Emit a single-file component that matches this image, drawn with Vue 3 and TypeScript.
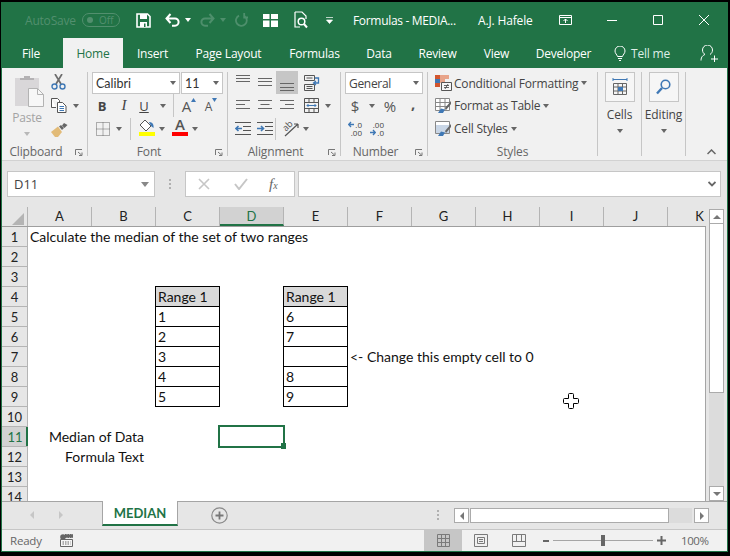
<script setup lang="ts">
interface Tab { label: string; width: number; active?: boolean }
interface Cell { text?: string; kind?: 'plain' | 'head' | 'box' | 'right' }

const tabs: Tab[] = [
  { label: 'File', width: 58 },
  { label: 'Home', width: 60, active: true },
  { label: 'Insert', width: 59 },
  { label: 'Page Layout', width: 93 },
  { label: 'Formulas', width: 79 },
  { label: 'Data', width: 50 },
  { label: 'Review', width: 67 },
  { label: 'View', width: 51 },
  { label: 'Developer', width: 83 }
]

const columns = ['A', 'B', 'C', 'D', 'E', 'F', 'G', 'H', 'I', 'J', 'K']
const rowNumbers = Array.from({ length: 14 }, (_, i) => i + 1)

const cellMap: Record<string, Cell> = {
  A1: { text: 'Calculate the median of the set of two ranges' },
  C4: { text: 'Range 1', kind: 'head' },
  E4: { text: 'Range 1', kind: 'head' },
  C5: { text: '1', kind: 'box' },
  C6: { text: '2', kind: 'box' },
  C7: { text: '3', kind: 'box' },
  C8: { text: '4', kind: 'box' },
  C9: { text: '5', kind: 'box' },
  E5: { text: '6', kind: 'box' },
  E6: { text: '7', kind: 'box' },
  E7: { kind: 'box' },
  E8: { text: '8', kind: 'box' },
  E9: { text: '9', kind: 'box' },
  F7: { text: '<- Change this empty cell to 0' },
  B11: { text: 'Median of Data', kind: 'right' },
  B12: { text: 'Formula Text', kind: 'right' }
}

const cells = rowNumbers.flatMap((r) =>
  columns.map((c) => ({ id: c + r, ...(cellMap[c + r] ?? {}) }))
)

const decMore = '.0\n.00'
const decLess = '.00\n.0'
</script>

<template>
  <div class="screen">
    <div class="win">
      <!-- title bar -->
      <header class="title">
        <span class="autosave">AutoSave</span>
        <span class="toggle"><i class="dot"></i><span>Off</span></span>
        <svg class="t-save" width="15" height="15" viewBox="0 0 15 15">
          <path d="M1 1h10.500L14 3.500V14H1z" fill="none" stroke="#fff" stroke-width="1.600" />
          <rect x="4" y="1" width="7" height="5" fill="#fff" />
          <rect x="4" y="9" width="7" height="5" fill="#fff" />
          <rect x="8" y="10.500" width="1.500" height="3.500" fill="#217346" />
        </svg>
        <svg class="t-undo" width="15" height="14" viewBox="0 0 15 14">
          <path d="M1.500 5.500h8.500a3.600 3.600 0 0 1 0 7.200H7M5.500 1L1.500 5.500 5.500 10" fill="none" stroke="#fff" stroke-width="2" />
        </svg>
        <i class="caret white t-c1"></i>
        <svg class="t-redo" width="15" height="14" viewBox="0 0 15 14">
          <path d="M13.500 5.500H5a3.600 3.600 0 0 0 0 7.200h3M9.500 1l4 4.500-4 4.500" fill="none" stroke="#4e8f6c" stroke-width="2" />
        </svg>
        <i class="caret dim t-c2"></i>
        <svg class="t-repeat" width="13" height="14" viewBox="0 0 13 14">
          <path d="M4 2.600A5.400 5.400 0 1 0 9.400 3M9.200 0v4.500H13" fill="none" stroke="#4e8f6c" stroke-width="1.800" />
        </svg>
        <svg class="t-grid" width="15" height="13" viewBox="0 0 15 13">
          <path d="M0 0h6.500v5H0zM8 0h7v5H8zM0 6.500h6.500V13H0zM8 6.500h7V13H8z" fill="#fff" />
        </svg>
        <svg class="t-prev" width="14" height="18" viewBox="0 0 14 18">
          <path d="M1 1h7l4 4v3M1 1v15h5" fill="none" stroke="#fff" stroke-width="1.200" />
          <circle cx="7.500" cy="10.500" r="3.300" fill="none" stroke="#fff" stroke-width="1.500" />
          <path d="M10 13l3 3.500" stroke="#fff" stroke-width="2" />
        </svg>
        <svg class="t-cust" width="7" height="7" viewBox="0 0 7 7">
          <path d="M0 .5h7M.5 3h6L3.500 6.500z" fill="#fff" stroke="#fff" stroke-width=".7" />
        </svg>
        <span class="doc">Formulas - MEDIA...</span>
        <span class="user">A.J. Hafele</span>
        <svg class="t-disp" width="13" height="10" viewBox="0 0 13 10">
          <path d="M.5.500h12v9H.5zM.5 2.500h12M6.500 8V4M4.500 6l2-2 2 2" fill="none" stroke="#fff" />
        </svg>
        <svg class="t-min" width="10" height="10" viewBox="0 0 10 10"><path d="M0 5.500h10" stroke="#fff" /></svg>
        <svg class="t-max" width="10" height="10" viewBox="0 0 10 10"><path d="M.5.500h9v9h-9z" fill="none" stroke="#fff" /></svg>
        <svg class="t-close" width="10" height="10" viewBox="0 0 10 10"><path d="M0 0l10 10M10 0L0 10" stroke="#fff" /></svg>
      </header>

      <!-- tabs -->
      <nav class="tabs">
        <span
          v-for="t in tabs"
          :key="t.label"
          class="tab"
          :class="{ active: t.active }"
          :style="{ width: t.width + 'px' }"
        >{{ t.label }}</span>
        <svg class="bulb" width="12" height="15" viewBox="0 0 12 15">
          <path d="M3.500 10.500C3 8.500 1 7.500 1 5a5 5 0 0 1 10 0c0 2.500-2 3.500-2.500 5.500zM4 12.500h4M5 14.500h2" fill="none" stroke="#fff" />
        </svg>
        <span class="tell">Tell me</span>
        <svg class="person" width="18" height="17" viewBox="0 0 18 17">
          <path d="M1 15.500c0-4 2.500-5.500 4-6-1.500-1-2.500-2.500-2.500-4.500a5 5 0 0 1 10 0c0 2-1 3.500-2.500 4.500" fill="none" stroke="#fff" />
          <path d="M11 14h7M14.500 10.500v6.500" stroke="#fff" />
        </svg>
      </nav>

      <!-- ribbon -->
      <section class="ribbon">
        <div class="group clipboard">
          <div class="body row-body">
            <div class="paste">
              <svg width="30" height="32" viewBox="0 0 30 32">
                <rect x="1" y="3" width="24" height="28" fill="#d9d7d9" />
                <path d="M6 5V3h4V1h6v2h4v2z" fill="#b4b2b4" />
                <path d="M14.500 13.500h9l6 6v12h-15z" fill="#f7f7f7" stroke="#b3b3b3" />
                <path d="M23.500 13.500v6h6" fill="none" stroke="#b3b3b3" />
              </svg>
              <span class="paste-label">Paste</span>
              <i class="caret light"></i>
            </div>
            <div class="clip-tools">
              <svg class="scissors" width="15" height="16" viewBox="0 0 15 16">
                <path d="M4 0l6 10M11 0L5 10" stroke="#6d6d6d" stroke-width="1.700" fill="none" />
                <circle cx="3.500" cy="12.500" r="2.500" fill="none" stroke="#3f78b5" stroke-width="1.400" />
                <circle cx="11.500" cy="12.500" r="2.500" fill="none" stroke="#3f78b5" stroke-width="1.400" />
              </svg>
              <div class="copy-row">
                <svg width="16" height="15" viewBox="0 0 16 15">
                  <path d="M.5.500h6l2 2v2M.5.500v9h4.500" fill="#fff" stroke="#555" />
                  <path d="M6.500 4.500h5l3.500 3.500v6.500H6.500z" fill="#fff" stroke="#555" />
                  <path d="M8.500 8.500h4.500M8.500 10.500h4.500M8.500 12.500h4.500" stroke="#3f78b5" />
                </svg>
                <i class="caret"></i>
              </div>
              <svg class="brush" width="17" height="15" viewBox="0 0 17 15">
                <path d="M0 10l7-5.500L11 10l-4 5H4z" fill="#e2bb78" />
                <path d="M8 4.500L11 8l2-2-3-3zM11 3.500l2-2.500 3.500 2-3 3z" fill="#666" />
              </svg>
            </div>
          </div>
          <div class="label launched">
            <span>Clipboard</span>
            <svg class="launch" width="8" height="7" viewBox="0 0 8 7"><path d="M.5 6V.5H7M3 3l3.500 3M4 6.500h3v-3" fill="none" stroke="#777" /></svg>
          </div>
        </div>
        <i class="sep"></i>

        <div class="group font">
          <div class="body">
            <div class="r r1 font-r1">
              <span class="select fname"><span>Calibri</span><i class="caret"></i></span>
              <span class="select fsize"><span>11</span><i class="caret"></i></span>
            </div>
            <div class="r r2 font-r2">
              <b class="s w22 glyph">B</b>
              <em class="s w22 glyph ital">I</em>
              <u class="s w18 glyph">U</u>
              <span class="s w20"><i class="caret"></i></span>
              <i class="vsep tall"></i>
              <span class="s w30 big-a">A<svg width="5" height="4" viewBox="0 0 5 4"><path d="M0 4l2.500-4L5 4z" fill="#3f78b5" /></svg></span>
              <span class="s w14 small-a">A<svg width="5" height="4" viewBox="0 0 5 4"><path d="M0 0l2.500 4L5 0z" fill="#3f78b5" /></svg></span>
            </div>
            <div class="r r3 font-r3">
              <svg width="14" height="14" viewBox="0 0 14 14">
                <path d="M.5.500h13v13H.5zM7 .5v13M.5 7h13" fill="none" stroke="#666" stroke-dasharray="1 1" />
              </svg>
              <span class="s w18"><i class="caret"></i></span>
              <i class="vsep short"></i>
              <span class="colorbtn fill">
                <svg width="17" height="13" viewBox="0 0 17 13">
                  <path d="M7 1l6 6-5 5-6-6z" fill="#fff" stroke="#555" />
                  <path d="M11 3c3 0 5 2 4.500 6L13 7z" fill="#3f78b5" />
                </svg>
                <i class="bar yellow"></i>
              </span>
              <span class="s w14"><i class="caret"></i></span>
              <span class="colorbtn fcolor">
                <span class="a-letter">A</span>
                <i class="bar red"></i>
              </span>
              <span class="s w14 c-after"><i class="caret"></i></span>
            </div>
          </div>
          <div class="label launched">
            <span>Font</span>
            <svg class="launch" width="8" height="7" viewBox="0 0 8 7"><path d="M.5 6V.5H7M3 3l3.500 3M4 6.500h3v-3" fill="none" stroke="#777" /></svg>
          </div>
        </div>
        <i class="sep"></i>

        <div class="group align">
          <div class="body">
            <div class="r r1 align-r1">
              <svg width="14" height="22" viewBox="0 0 14 22"><path d="M0 3.500h14M0 6.500h14M0 9.500h14" stroke="#666" /></svg>
              <svg class="a-mid" width="14" height="22" viewBox="0 0 14 22"><path d="M0 6.500h14M0 9.500h14M0 13.500h14" stroke="#666" /></svg>
              <span class="a-sel"><svg width="14" height="22" viewBox="0 0 14 22"><path d="M0 11.500h14M0 15.500h14M0 18.500h14" stroke="#666" /></svg></span>
              <svg class="a-wrap" width="16" height="16" viewBox="0 0 16 16">
                <path d="M.5.500h10v5H.5zM.5 9.500h10v6H.5zM2.500 3h6M2.500 11.500h6M2.500 13.500h6" fill="none" stroke="#555" />
                <path d="M11 3h3.500v5H10M12 6l-2.500 2 2.500 2" fill="none" stroke="#3f78b5" stroke-width="1.300" />
              </svg>
            </div>
            <div class="r r2 align-r2">
              <svg width="14" height="23" viewBox="0 0 14 23"><path d="M0 6.500h14M0 10.500h9M0 14.500h14" stroke="#666" /></svg>
              <svg class="a-mid" width="14" height="23" viewBox="0 0 14 23"><path d="M0 6.500h14M2.500 10.500h9M0 14.500h14" stroke="#666" /></svg>
              <svg class="a-right" width="14" height="23" viewBox="0 0 14 23"><path d="M0 6.500h14M5 10.500h9M0 14.500h14" stroke="#666" /></svg>
              <svg class="a-merge" width="15" height="15" viewBox="0 0 15 15">
                <path d="M.5.500h14v14H.5zM.5 4.500h14M.5 10.500h14M5 .5v4M10 .5v4M5 10.500v4M10 10.500v4" fill="none" stroke="#555" />
                <path d="M3 7.500h9M4.500 6L3 7.500 4.500 9M10.500 6L12 7.500 10.500 9" fill="none" stroke="#3f78b5" />
              </svg>
              <i class="caret merge-c"></i>
            </div>
            <div class="r r3 align-r3">
              <svg width="16" height="14" viewBox="0 0 16 14">
                <path d="M0 .5h16M8 4.500h8M8 8.500h8M0 12.500h16" stroke="#555" />
                <path d="M7 6.500H1M3.500 4L1 6.500 3.500 9" fill="none" stroke="#3f78b5" stroke-width="1.600" />
              </svg>
              <svg class="a-ind2" width="16" height="14" viewBox="0 0 16 14">
                <path d="M0 .5h16M8 4.500h8M8 8.500h8M0 12.500h16" stroke="#555" />
                <path d="M0 6.500h6M4 4l2.500 2.500L4 9" fill="none" stroke="#3f78b5" stroke-width="1.600" />
              </svg>
              <i class="vsep short a-vs"></i>
              <span class="a-orient">
                <svg width="18" height="18" viewBox="0 0 18 18">
                  <path d="M3 16L16 4M16 4h-4M16 4v4" fill="none" stroke="#555" stroke-width="1.200" />
                </svg>
                <span class="ab">ab</span>
              </span>
              <i class="caret o-c"></i>
            </div>
          </div>
          <div class="label launched">
            <span>Alignment</span>
            <svg class="launch" width="8" height="7" viewBox="0 0 8 7"><path d="M.5 6V.5H7M3 3l3.500 3M4 6.500h3v-3" fill="none" stroke="#777" /></svg>
          </div>
        </div>
        <i class="sep"></i>

        <div class="group number">
          <div class="body">
            <div class="r r1 num-r1">
              <span class="select general"><span>General</span><i class="caret"></i></span>
            </div>
            <div class="r r2 num-r2">
              <span class="s w16 numg">$</span>
              <span class="s w18"><i class="caret"></i></span>
              <span class="s w18 numg">%</span>
              <span class="s comma">,</span>
            </div>
            <div class="r r3 num-r3">
              <span class="dec">
                <svg class="dec-arrow top" width="6" height="7" viewBox="0 0 6 7"><path d="M6 3.500H1M3 1L.7 3.500 3 6" fill="none" stroke="#3f78b5" stroke-width="1.300" /></svg>
                <span class="dec-t">{{ decMore }}</span>
              </span>
              <span class="dec">
                <svg class="dec-arrow bottom" width="6" height="7" viewBox="0 0 6 7"><path d="M0 3.500h5M3 1l2.300 2.500L3 6" fill="none" stroke="#3f78b5" stroke-width="1.300" /></svg>
                <span class="dec-t">{{ decLess }}</span>
              </span>
            </div>
          </div>
          <div class="label launched">
            <span>Number</span>
            <svg class="launch" width="8" height="7" viewBox="0 0 8 7"><path d="M.5 6V.5H7M3 3l3.500 3M4 6.500h3v-3" fill="none" stroke="#777" /></svg>
          </div>
        </div>
        <i class="sep"></i>

        <div class="group styles">
          <div class="body">
            <div class="r r1 style-row">
              <svg width="17" height="16" viewBox="0 0 17 16">
                <rect x="0" y="0" width="5" height="4" fill="#d2552d" /><rect x="5" y="0" width="9" height="4" fill="#e8a48a" />
                <rect x="0" y="4" width="5" height="4" fill="#3f78b5" /><rect x="5" y="4" width="5" height="4" fill="#e8a48a" />
                <rect x="0" y="8" width="5" height="4" fill="#d2552d" />
                <path d="M6.500 7.500h10v8h-10z" fill="#f6f6f6" stroke="#555" />
                <path d="M9 10.500h5M9 12.500h5M10 14l3-5" stroke="#444" stroke-width=".8" />
              </svg>
              <span class="st">Conditional Formatting</span><i class="caret"></i>
            </div>
            <div class="r r2 style-row">
              <svg width="17" height="16" viewBox="0 0 17 16">
                <path d="M.5.500h14v12H.5zM.5 4.500h14M.5 8.500h14M5 .5v12M10 .5v12" fill="#fff" stroke="#888" />
                <path d="M16 3L10 10l1 2 5-6z" fill="#666" />
                <path d="M3 15l3-4.500 4 1-2 3.500z" fill="#3f78b5" />
              </svg>
              <span class="st">Format as Table</span><i class="caret"></i>
            </div>
            <div class="r r3 style-row">
              <svg width="17" height="16" viewBox="0 0 17 16">
                <path d="M.5.500h14v12H.5z" fill="#fff" stroke="#888" />
                <rect x="1" y="4" width="13" height="8" fill="#c9d6e6" />
                <path d="M16 3L10 10l1 2 5-6z" fill="#666" />
                <path d="M3 15l3-4.500 4 1-2 3.500z" fill="#3f78b5" />
              </svg>
              <span class="st">Cell Styles</span><i class="caret"></i>
            </div>
          </div>
          <div class="label">Styles</div>
        </div>
        <i class="sep"></i>

        <div class="group big">
          <span class="bigbtn">
            <svg width="16" height="18" viewBox="0 0 16 18">
              <path d="M1 1.500h14M1 0v3M15 0v3" fill="none" stroke="#3f78b5" />
              <path d="M1.500 5.500h13v11h-13zM1.500 9h13M1.500 13h13M6 5.500v11M10.500 5.500v11" fill="#f6f6f6" stroke="#666" />
              <rect x="6" y="9" width="5" height="4" fill="#3f78b5" />
            </svg>
          </span>
          <span class="bigtext">Cells</span>
          <i class="caret"></i>
        </div>
        <i class="sep"></i>

        <div class="group big">
          <span class="bigbtn">
            <svg width="15" height="16" viewBox="0 0 15 16">
              <circle cx="9.500" cy="5.500" r="4.300" fill="none" stroke="#3f78b5" stroke-width="1.600" />
              <path d="M6 9l-5 5.500" stroke="#3f78b5" stroke-width="2.400" />
            </svg>
          </span>
          <span class="bigtext">Editing</span>
          <i class="caret"></i>
        </div>
        <i class="sep"></i>

        <div class="collapse">
          <svg width="9" height="6" viewBox="0 0 9 6"><path d="M.5 5l4-4 4 4" fill="none" stroke="#666" stroke-width="1.500" /></svg>
        </div>
      </section>

      <!-- formula bar -->
      <section class="fbar">
        <div class="namebox"><span>D11</span><i class="caret"></i></div>
        <div class="grip"><i></i><i></i><i></i></div>
        <div class="fxbox">
          <svg width="14" height="12" viewBox="0 0 14 12"><path d="M1 1l10 10M11 1L1 11" stroke="#c6c6c6" stroke-width="1.600" /></svg>
          <svg width="14" height="12" viewBox="0 0 14 12"><path d="M1 6l4 5 8-10" fill="none" stroke="#c6c6c6" stroke-width="2" /></svg>
          <span class="fx">f<small>x</small></span>
        </div>
        <div class="finput">
          <svg width="8" height="6" viewBox="0 0 8 6"><path d="M.5 1l3.500 3.500L7.500 1" fill="none" stroke="#666" stroke-width="1.800" /></svg>
        </div>
      </section>

      <!-- sheet -->
      <main class="main">
        <div class="sheetcol">
          <div class="colhead">
            <div class="corner"><i></i></div>
            <div v-for="c in columns" :key="c" class="ch" :class="{ sel: c === 'D' }">{{ c }}</div>
          </div>
          <div class="sheetbody">
            <div class="rowhead">
              <div v-for="r in rowNumbers" :key="r" class="rh" :class="{ sel: r === 11 }">{{ r }}</div>
            </div>
            <div class="gridwrap">
              <div class="grid">
                <div
                  v-for="c in cells"
                  :key="c.id"
                  class="cell"
                  :class="c.kind"
                ><span v-if="c.text">{{ c.text }}</span></div>
              </div>
              <div class="selection"><i></i></div>
              <svg class="cursor" width="16" height="16" viewBox="0 0 16 16">
                <path d="M5.500 1.500a1 1 0 0 1 1-1h3a1 1 0 0 1 1 1v4h4a1 1 0 0 1 1 1v3a1 1 0 0 1-1 1h-4v4a1 1 0 0 1-1 1h-3a1 1 0 0 1-1-1v-4h-4a1 1 0 0 1-1-1v-3a1 1 0 0 1 1-1h4z" fill="#fff" stroke="#000" />
              </svg>
            </div>
          </div>
        </div>
        <div class="vscroll">
          <div class="sbtn"><i class="tri up"></i></div>
          <div class="vthumb"></div>
          <div class="vtrack"></div>
          <div class="sbtn"><i class="tri down"></i></div>
        </div>
      </main>

      <!-- sheet tabs -->
      <section class="sheetbar">
        <i class="tri left light nav1"></i>
        <i class="tri right light nav2"></i>
        <div class="sheettab">MEDIAN</div>
        <svg class="plus" width="17" height="17" viewBox="0 0 17 17">
          <circle cx="8.500" cy="8.500" r="7.700" fill="none" stroke="#8a8a8a" stroke-width="1.200" />
          <path d="M4.500 8.500h8M8.500 4.500v8" stroke="#777" stroke-width="1.800" />
        </svg>
        <div class="grip hgrip"><i></i><i></i><i></i></div>
        <div class="hscroll">
          <div class="sbtn h"><i class="tri left"></i></div>
          <div class="hthumb"></div>
          <div class="htrack"></div>
          <div class="sbtn h end"><i class="tri right"></i></div>
        </div>
      </section>

      <!-- status -->
      <footer class="status">
        <span class="ready">Ready</span>
        <svg class="macro" width="13" height="13" viewBox="0 0 13 13">
          <circle cx="3" cy="3" r="2.800" fill="#666" />
          <path d="M.5 5.500h12v7H.5z" fill="#f6f6f6" stroke="#666" />
          <path d="M5 .5h8v3H5zM2.500 8h8M2.500 10h8" stroke="#666" fill="#666" stroke-dasharray="1.500 1" />
        </svg>
        <div class="viewbtn active">
          <svg width="13" height="13" viewBox="0 0 13 13"><path d="M.5.500h12v12H.5zM.5 4.500h12M.5 8.500h12M4.500 .5v12M8.500 .5v12" fill="none" stroke="#7a7a7a" /></svg>
        </div>
        <svg class="v2" width="14" height="13" viewBox="0 0 14 13"><path d="M.5.500h13v12H.5zM3.500 3.500h7v6h-7zM5 5.500h4M5 7.500h4" fill="none" stroke="#7a7a7a" /></svg>
        <svg class="v3" width="14" height="13" viewBox="0 0 14 13"><path d="M.5.500h13v12H.5zM.5 7.500h13M4.500 .5v7M9.500 .5v7" fill="none" stroke="#7a7a7a" /></svg>
        <i class="zm minus"></i>
        <div class="slider"><i></i></div>
        <svg class="zp" width="9" height="9" viewBox="0 0 9 9"><path d="M0 4.500h9M4.500 0v9" stroke="#666" stroke-width="2" /></svg>
        <span class="zoom">100%</span>
      </footer>
    </div>
  </div>
</template>

<style>
html, body { margin: 0; background: #000; }
</style>

<style scoped>
.screen {
  width: 730px;
  height: 556px;
  background: #000;
  box-sizing: border-box;
  padding: 2px 2px 4px 1px;
  overflow: hidden;
}
.win {
  width: 727px;
  height: 550px;
  box-sizing: border-box;
  border: 1px solid #217346;
  border-top: 0;
  background: #e6e6e6;
  display: flex;
  flex-direction: column;
  font-family: "Open Sans", "Noto Sans", sans-serif;
  color: #444;
  overflow: hidden;
}
svg { display: block; flex: none; }
i { display: block; flex: none; }

.caret {
  width: 0;
  height: 0;
  border-left: 3px solid transparent;
  border-right: 3px solid transparent;
  border-top: 4px solid #666;
}
.caret.white { border-top-color: #fff; }
.caret.dim { border-top-color: #4e8f6c; }
.caret.light { border-top-color: #b8b8b8; }

/* title bar */
.title {
  height: 36px;
  background: #217346;
  display: flex;
  align-items: center;
  color: #fff;
  font-size: 12px;
  white-space: nowrap;
  flex: none;
}
.autosave { margin-left: 23px; width: 50px; color: #528f6e; font-size: 12px; letter-spacing: -.2px; }
.toggle {
  margin-left: 7px;
  width: 38px;
  height: 14px;
  box-sizing: border-box;
  border: 1px solid #528f6e;
  border-radius: 7px;
  color: #528f6e;
  font-size: 10px;
  display: flex;
  align-items: center;
  gap: 6px;
  padding-left: 4px;
}
.dot { width: 6px; height: 6px; border-radius: 50%; background: #528f6e; }
.t-save { margin-left: 16px; }
.t-undo { margin-left: 14px; }
.t-c1 { margin-left: 5px; }
.t-redo { margin-left: 9px; }
.t-c2 { margin-left: 5px; }
.t-repeat { margin-left: 9px; }
.t-grid { margin-left: 15px; }
.t-prev { margin-left: 16px; }
.t-cust { margin-left: 18px; }
.doc { margin-left: 20px; width: 105px; font-size: 12px; letter-spacing: -.32px; }
.user { margin-left: 20px; width: 55px; font-size: 12px; letter-spacing: -.15px; }
.t-disp { margin-left: 26px; }
.t-min { margin-left: 35px; }
.t-max { margin-left: 36px; }
.t-close { margin-left: 36px; }

/* tabs */
.tabs {
  height: 30px;
  background: #217346;
  display: flex;
  align-items: stretch;
  flex: none;
  color: #fff;
  font-size: 12px;
  letter-spacing: -.2px;
}
.tab {
  display: flex;
  align-items: center;
  justify-content: center;
  flex: none;
  white-space: nowrap;
}
.tab.active { background: #f1f1f1; color: #217346; margin-left: 3px; }
.bulb { margin-left: 9px; align-self: center; }
.tell { margin-left: 5px; width: 69px; align-self: center; color: #dfeee6; }
.person { align-self: center; }

/* ribbon */
.ribbon {
  height: 93px;
  box-sizing: border-box;
  border-bottom: 1px solid #d2d2d2;
  background: #f1f1f1;
  display: flex;
  flex: none;
  font-size: 12px;
}
.sep { width: 1px; height: 84px; margin-top: 4px; background: #c6c6c6; }
.group {
  margin-top: 4px;
  height: 87px;
  display: flex;
  flex-direction: column;
  flex: none;
}
.clipboard { width: 85px; }
.font { width: 139px; }
.align { width: 112px; }
.number { width: 86px; }
.styles { width: 169px; }
.big { width: 43px; align-items: center; }
.body { height: 73px; flex: none; }
.row-body { display: flex; }
.label {
  height: 14px;
  line-height: 14px;
  font-size: 12px;
  letter-spacing: -.15px;
  color: #666;
  display: flex;
  justify-content: center;
  position: relative;
}
.label.launched { padding-right: 17px; }
.launch { position: absolute; right: 4px; top: 4px; }
.r { display: flex; align-items: center; }
.r1 { height: 22px; }
.r2 { height: 23px; }
.r3 { height: 23px; }
.s { display: flex; align-items: center; justify-content: center; flex: none; }
.w14 { width: 14px; }
.w16 { width: 16px; }
.w18 { width: 18px; }
.w20 { width: 20px; }
.w22 { width: 22px; }
.w30 { width: 30px; }
.vsep { width: 1px; background: #c6c6c6; }
.vsep.tall { height: 23px; }
.vsep.short { height: 22px; margin-left: 2px; }

/* clipboard */
.paste {
  margin-left: 10px;
  margin-top: 3px;
  width: 34px;
  display: flex;
  flex-direction: column;
  align-items: center;
  color: #a3a3a3;
}
.paste-label { font-size: 12px; line-height: 16px; margin-top: 3px; margin-right: 4px; letter-spacing: -.2px; }
.paste .caret { margin-top: 6px; margin-right: 4px; }
.clip-tools { margin-left: 5px; padding-top: 2px; }
.copy-row { display: flex; align-items: center; gap: 6px; margin-top: 8px; }
.brush { margin-top: 9px; }

/* font */
.font-r1 { padding-left: 4px; gap: 1px; }
.select {
  height: 22px;
  box-sizing: border-box;
  background: #fff;
  border: 1px solid #c6c6c6;
  display: flex;
  align-items: center;
  justify-content: space-between;
  padding: 0 3px 0 3px;
  font-size: 12px;
  color: #444;
}
.fname { width: 88px; font-family: "Lato", sans-serif; font-size: 12.500px; color: #333; }
.fsize { width: 42px; font-family: "Lato", sans-serif; font-size: 12.500px; color: #333; }
.font-r2 { padding-left: 3px; }
.glyph { font-size: 13px; color: #444; }
.ital { font-family: "Liberation Serif", serif; font-size: 15px; }
.big-a { font-size: 15px; align-items: flex-end; gap: 0; color: #555; height: 20px; }
.big-a svg { align-self: flex-start; margin-top: 2px; }
.small-a { font-size: 12px; color: #555; height: 18px; align-items: flex-end; }
.small-a svg { align-self: flex-start; margin-top: 1px; }
.font-r3 { padding-left: 8px; }
.colorbtn { display: flex; flex-direction: column; align-items: center; height: 23px; flex: none; }
.fill { margin-left: 7px; width: 17px; padding-top: 2px; box-sizing: border-box; }
.fcolor { width: 16px; margin-left: 3px; }
.a-letter { font-size: 15px; line-height: 15px; color: #555; font-weight: 600; }
.bar { width: 16px; height: 4px; margin-top: auto; margin-bottom: 4px; }
.yellow { background: #ffff00; }
.red { background: #ff0000; }

/* alignment */
.align-r1 { padding-left: 8px; }
.a-mid { margin-left: 8px; }
.a-sel {
  margin-left: 4px;
  width: 22px;
  height: 23px;
  margin-top: -1px;
  background: #c6c6c6;
  display: flex;
  justify-content: center;
  padding-top: 1px;
  box-sizing: border-box;
}
.a-wrap { margin-left: 6px; }
.align-r2 { padding-left: 8px; }
.a-right { margin-left: 8px; }
.a-merge { margin-left: 10px; }
.merge-c { margin-left: 6px; }
.align-r3 { padding-left: 7px; }
.a-ind2 { margin-left: 6px; }
.a-vs { margin-left: 8px; margin-right: 0; }
.a-orient { margin-left: 6px; position: relative; width: 18px; height: 18px; flex: none; }
.ab {
  position: absolute;
  left: 0;
  top: 0;
  font-size: 9px;
  line-height: 11px;
  color: #555;
  transform: rotate(-45deg);
}
.o-c { margin-left: 3px; }

/* number */
.num-r1 { padding-left: 4px; }
.general { width: 78px; font-size: 12px; letter-spacing: -.3px; }
.num-r2 { padding-left: 6px; }
.numg { font-size: 15px; color: #555; }
.comma { font-size: 15px; font-weight: 700; color: #555; margin-left: 12px; margin-top: -6px; }
.num-r3 { padding-left: 7px; gap: 8px; }
.dec { position: relative; width: 14px; height: 15px; flex: none; }
.dec-t {
  display: block;
  text-align: right;
  white-space: pre-line;
  font-size: 8px;
  line-height: 7.500px;
  color: #444;
}
.dec-arrow { position: absolute; left: 0; }
.dec-arrow.top { top: 0; }
.dec-arrow.bottom { bottom: 0; }

/* styles */
.style-row { padding-left: 7px; }
.st { margin-left: 2px; margin-right: 3px; white-space: nowrap; font-size: 12px; letter-spacing: -.2px; color: #444; }

/* cells, editing */
.bigbtn {
  width: 30px;
  height: 30px;
  box-sizing: border-box;
  border: 1px solid #c6c6c6;
  background: #f6f6f6;
  display: flex;
  align-items: center;
  justify-content: center;
}
.bigtext { margin-top: 5px; line-height: 16px; font-size: 12px; letter-spacing: -.1px; }
.big .caret { margin-top: 6px; }
.collapse {
  flex: 1;
  display: flex;
  justify-content: flex-end;
  align-items: flex-end;
  padding: 0 11px 5px 0;
}

/* formula bar */
.fbar {
  height: 46px;
  box-sizing: border-box;
  padding: 10px 5px 10px 5px;
  display: flex;
  flex: none;
  background: #e6e6e6;
}
.namebox {
  width: 148px;
  height: 26px;
  box-sizing: border-box;
  border: 1px solid #c6c6c6;
  background: #fff;
  display: flex;
  align-items: center;
  justify-content: space-between;
  padding: 0 5px 0 6px;
  font-size: 13px;
}
.namebox .caret { border-top-color: #888; border-left-width: 4px; border-right-width: 4px; border-top-width: 5px; }
.grip { width: 30px; display: flex; flex-direction: column; align-items: center; justify-content: center; gap: 2px; }
.grip i { width: 2px; height: 2px; background: #b0b0b0; }
.fxbox {
  width: 110px;
  height: 26px;
  box-sizing: border-box;
  border: 1px solid #c6c6c6;
  background: #fff;
  display: flex;
  align-items: center;
  padding-left: 12px;
  gap: 22px;
}
.fx { font-family: "Liberation Serif", serif; font-style: italic; font-size: 15px; color: #666; margin-left: -1px; }
.fx small { font-size: 10px; }
.finput {
  margin-left: 3px;
  width: 423px;
  height: 26px;
  box-sizing: border-box;
  border: 1px solid #c6c6c6;
  background: #fff;
  display: flex;
  align-items: center;
  justify-content: flex-end;
  padding-right: 4px;
}

/* sheet */
.main { display: flex; height: 294px; flex: none; }
.sheetcol { width: 704px; display: flex; flex-direction: column; flex: none; }
.colhead { display: flex; height: 20px; flex: none; overflow: hidden; box-sizing: border-box; border-bottom: 1px solid #9e9e9e; }
.corner {
  width: 26px;
  box-sizing: border-box;
  flex: none;
  border-right: 1px solid #b4b4b4;
  position: relative;
}
.corner i {
  position: absolute;
  right: 3px;
  bottom: 1px;
  width: 0;
  height: 0;
  border-left: 12px solid transparent;
  border-bottom: 12px solid #b4b4b4;
}
.ch {
  width: 64px;
  flex: none;
  box-sizing: border-box;
  border-right: 1px solid #b4b4b4;
  text-align: center;
  line-height: 19px;
  font-size: 13px;
  font-family: "Lato", sans-serif;
  color: #222;
}
.ch.sel { background: #d2d2d2; border-bottom: 2px solid #217346; color: #217346; height: 19px; }
.sheetbody { display: flex; height: 274px; flex: none; overflow: hidden; }
.rowhead { width: 26px; flex: none; box-sizing: border-box; border-right: 1px solid #b4b4b4; }
.rh {
  height: 20px;
  box-sizing: border-box;
  border-bottom: 1px solid #b4b4b4;
  text-align: center;
  line-height: 20px;
  font-size: 13px;
  font-family: "Lato", sans-serif;
  color: #222;
}
.rh.sel { background: #d2d2d2; color: #217346; box-shadow: inset -2px 0 #217346; margin-right: -1px; }
.gridwrap {
  position: relative;
  flex: 1;
  background: #fff;
  box-sizing: border-box;
  border-right: 1px solid #a5a5a5;
  overflow: hidden;
}
.grid {
  display: grid;
  grid-template-columns: repeat(11, 64px);
  grid-auto-rows: 20px;
  font-family: "Lato", sans-serif;
  font-size: 14px;
  color: #111;
}
.cell {
  box-sizing: border-box;
  padding-left: 2px;
  line-height: 20px;
  white-space: nowrap;
  display: flex;
  align-items: center;
  position: relative;
}
.cell.head, .cell.box {
  border-right: 1px solid #000;
  border-bottom: 1px solid #000;
  box-shadow: -1px 0 #000, 0 -1px #000, -1px -1px #000;
}
.cell.head { background: #d9d9d9; }
.cell.right { justify-content: flex-end; padding-right: 12px; padding-left: 0; }
.selection {
  position: absolute;
  left: 190px;
  top: 198px;
  width: 67px;
  height: 23px;
  box-sizing: border-box;
  border: 2px solid #217346;
}
.selection i {
  position: absolute;
  right: -3px;
  bottom: -3px;
  width: 5px;
  height: 6px;
  background: #217346;
}
.cursor { position: absolute; left: 535px; top: 166px; }

/* scrollbars */
.vscroll {
  margin-left: 3px;
  width: 15px;
  margin-top: 2px;
  display: flex;
  flex-direction: column;
}
.sbtn {
  width: 15px;
  height: 15px;
  box-sizing: border-box;
  border: 1px solid #ababab;
  background: #fff;
  display: flex;
  align-items: center;
  justify-content: center;
  flex: none;
}
.tri { width: 0; height: 0; }
.tri.up { border-left: 4px solid transparent; border-right: 4px solid transparent; border-bottom: 4px solid #777; }
.tri.down { border-left: 4px solid transparent; border-right: 4px solid transparent; border-top: 4px solid #777; }
.tri.left { border-top: 4px solid transparent; border-bottom: 4px solid transparent; border-right: 4px solid #777; }
.tri.right { border-top: 4px solid transparent; border-bottom: 4px solid transparent; border-left: 4px solid #777; }
.tri.left.light { border-right-color: #c6c6c6; }
.tri.right.light { border-left-color: #c6c6c6; }
.vthumb { height: 169px; background: #fff; box-sizing: border-box; border: 1px solid #ababab; border-top: 0; }
.vtrack { flex: 1; background: #dcdcdc; }

/* sheet tabs */
.sheetbar {
  height: 29px;
  box-sizing: border-box;
  border-top: 1px solid #a5a5a5;
  border-bottom: 1px solid #c6c6c6;
  background: #e6e6e6;
  display: flex;
  align-items: flex-start;
  flex: none;
}
.nav1 { margin-left: 28px; margin-top: 9px; }
.nav2 { margin-left: 25px; margin-top: 9px; }
.sheettab {
  margin-left: 39px;
  margin-top: -1px;
  width: 76px;
  height: 25px;
  box-sizing: border-box;
  background: #fff;
  border-left: 1px solid #a5a5a5;
  border-right: 1px solid #a5a5a5;
  border-bottom: 2px solid #217346;
  color: #217346;
  font-weight: 700;
  font-size: 13px;
  font-family: "Lato", sans-serif;
  text-align: center;
  line-height: 24px;
}
.plus { margin-left: 33px; margin-top: 5px; }
.hgrip { margin-left: 209px; width: 2px; margin-top: 8px; }
.hscroll { margin-left: 15px; margin-top: 6px; display: flex; }
.sbtn.h { height: 15px; }
.sbtn.end { margin-left: 2px; }
.hthumb { width: 199px; height: 15px; margin-left: 1px; box-sizing: border-box; background: #fff; border: 1px solid #ababab; }
.htrack { width: 23px; height: 15px; background: #dcdcdc; }

/* status */
.status {
  flex: 1;
  background: #f1f1f1;
  display: flex;
  align-items: center;
  font-size: 12px;
  color: #666;
}
.ready { margin-left: 8px; width: 50px; font-size: 11.500px; letter-spacing: -.2px; }
.viewbtn {
  margin-left: 351px;
  width: 38px;
  height: 21px;
  display: flex;
  align-items: center;
  justify-content: center;
}
.viewbtn.active { background: #c6c6c6; }
.v2 { margin-left: 12px; }
.v3 { margin-left: 24px; }
.zm.minus { margin-left: 17px; width: 6px; height: 2px; background: #666; }
.slider { margin-left: 4px; width: 100px; height: 1px; background: #a5a5a5; display: flex; justify-content: center; align-items: center; }
.slider i { width: 4px; height: 11px; background: #666; flex: none; }
.zp { margin-left: 4px; }
.zoom { margin-left: 15px; font-size: 11.500px; letter-spacing: -.4px; color: #666; }
</style>
